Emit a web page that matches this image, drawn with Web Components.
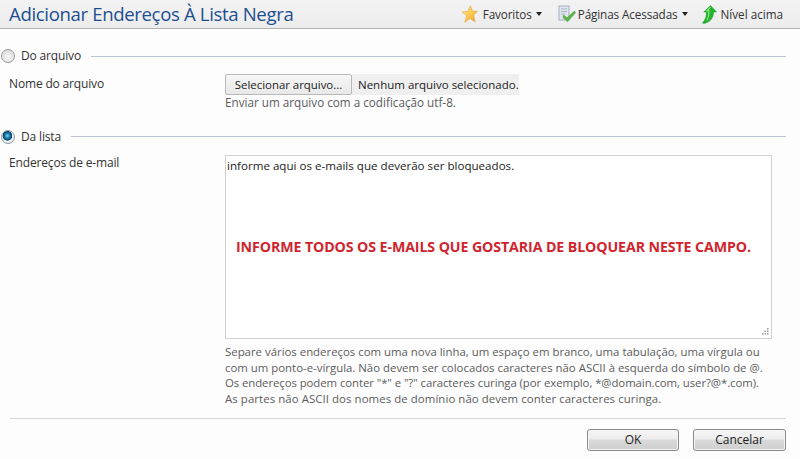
<!DOCTYPE html>
<html lang="pt"><head><meta charset="utf-8"><title>Adicionar Endereços</title>
<style>
html,body{margin:0;padding:0;background:#fdfdfd;height:459px;overflow:hidden}
body{font:12px/16px "Open Sans","Noto Sans",sans-serif;color:#333}
</style></head><body>
<dlg-header>
  <span slot="title">Adicionar Endereços À Lista Negra</span>
  <nav-item icon="star" menu style="letter-spacing:-.1px">Favoritos</nav-item>
  <nav-item icon="page" menu style="margin-left:5px;letter-spacing:-.1px">Páginas Acessadas</nav-item>
  <nav-item icon="up" style="margin-left:2px">Nível acima</nav-item>
</dlg-header>
<dlg-body>
  <section-head style="margin-top:19px">Do arquivo</section-head>
  <form-row label="Nome do arquivo" style="margin-top:10px;--label-top:2px">
    <file-pick></file-pick>
    <hint-text>Enviar um arquivo com a codificação utf-8.</hint-text>
  </form-row>
  <section-head checked style="margin-top:18px">Da lista</section-head>
  <form-row label="Endereços de e-mail" style="margin-top:10px">
    <text-box>informe aqui os e-mails que deverão ser bloqueados.</text-box>
    <hint-text style="margin-top:5px;font-size:11.4px"><span>Separe vários endereços com uma nova linha, um espaço em branco, uma tabulação, uma vírgula ou</span><br><span>com um ponto-e-vírgula. Não devem ser colocados caracteres não ASCII à esquerda do símbolo de @.</span><br><span style="letter-spacing:-.08px">Os endereços podem conter "*" e "?" caracteres curinga (por exemplo, *@domain.com, user?@*.com).</span><br><span style="letter-spacing:.08px">As partes não ASCII dos nomes de domínio não devem conter caracteres curinga.</span></hint-text>
  </form-row>
</dlg-body>
<dlg-footer>
  <act-button>OK</act-button>
  <act-button style="width:93px">Cancelar</act-button>
</dlg-footer>
<script>
function def(name, html, init){
  customElements.define(name, class extends HTMLElement{
    constructor(){super();this.attachShadow({mode:'open'}).innerHTML=html;}
    connectedCallback(){ if(init) init(this); }
  });
}
const F='"Open Sans","Noto Sans",sans-serif';
def('dlg-header',`<style>
:host{display:flex;align-items:center;justify-content:space-between;box-sizing:border-box;height:29px;padding:0 17px 0 9px;
 background:linear-gradient(#f3f3f3,#ececec);border-bottom:1px solid #b4b4b4}
.t{font:18.6px/26px ${F};color:#1c4f91;letter-spacing:-.36px}
.n{display:flex;align-items:center;gap:11px}
</style><div class="t"><slot name="title"></slot></div><div class="n"><slot></slot></div>`);
const ICONS={
 star:`<svg style="margin-right:5px;flex:none" width="17" height="18" viewBox="0 0 17 18"><defs><linearGradient id="s" x1="0" y1="0" x2="1" y2="1"><stop offset="0" stop-color="#fff09a"/><stop offset=".55" stop-color="#fbc64a"/><stop offset="1" stop-color="#f0932a"/></linearGradient></defs><path d="M9.500 .8l1.900 5.300 5.200.3-4 3.600 1.500 7-5-3.600-5.300 4 1.900-6.800L1 6.900l5.800-.4z" fill="url(#s)" stroke="#e2a94f" stroke-width=".7"/></svg>`,
 page:`<svg width="18" height="18" viewBox="0 0 18 18"><rect x="1" y="1" width="10" height="14" fill="#dfe6ee" stroke="#9fb0c2"/><path d="M3 4h6M3 6.500h6M3 9h4" stroke="#a7b5c4"/><path d="M5.500 10l3.500 2.800L16.500 6l1 1.800-8 9L5 12.500z" fill="#5cb548" stroke="#4a9a3a" stroke-width=".5"/></svg>`,
 up:`<svg style="margin-right:2px" width="16" height="19" viewBox="0 0 16 19"><path d="M9.500 .5l6 6.500H12.500c0 5-2.500 10-9.500 11.500l-1.500-.6C4.500 15 5.500 11 5.500 7H2.800z" fill="#1fb52c" stroke="#14922a" stroke-width=".5"/><path d="M9.500 2L6 5.800h2c.2 3-.4 6.500-2.200 9.500" fill="none" stroke="#9bea85" stroke-width="1.100"/></svg>`
};
def('nav-item',`<style>
:host{display:flex;align-items:center;gap:2px;font:11.7px/16px ${F};color:#333;white-space:nowrap;height:22px}
#i{display:flex;width:18px;justify-content:center}
#c{width:0;height:0;border:3.500px solid transparent;border-top:4px solid #222;border-bottom:0;display:none;margin-left:2px}
</style><span id="i"></span><slot></slot><span id="c"></span>`,el=>{
 el.shadowRoot.getElementById('i').innerHTML=ICONS[el.getAttribute('icon')]||'';
 if(el.hasAttribute('menu'))el.shadowRoot.getElementById('c').style.display='block';
});
def('dlg-body',`<style>:host{display:block}</style><slot></slot>`);
def('section-head',`<style>
:host{display:flex;align-items:center;height:16px;padding-right:14px;font:12px/16px ${F};letter-spacing:-.16px;color:#333}
.r{box-sizing:border-box;width:14px;height:14px;border-radius:50%;margin:0 6px 0 1px;flex:none;border:1px solid #9b9b9b;
 background:radial-gradient(circle at 50% 60%,#f6f6f6,#d4d4d4)}
:host([checked]) .r{background:radial-gradient(circle at 45% 40%,#7fd0ee 0,#0e6f9e 30%,#0b3f63 46%,#eef2f5 52%,#dfe3e6 100%);border-color:#8c99a4}
.l{flex:1;height:1px;background:#bcc3d2;margin-left:10px}
</style><span class="r"></span><slot></slot><span class="l"></span>`);
def('form-row',`<style>
:host{display:grid;grid-template-columns:216px 546px;padding-left:9px;font:12px/16px ${F};letter-spacing:-.16px;color:#333}
.a{padding-top:var(--label-top,0)}
.c{letter-spacing:0}
</style><div class="a" id="a"></div><div class="c"><slot></slot></div>`,el=>{el.shadowRoot.getElementById('a').textContent=el.getAttribute('label');});
def('file-pick',`<style>
:host{display:flex;align-items:center;height:21px;font:11.4px/16px ${F};color:#222}
.b{box-sizing:border-box;width:127px;height:21px;display:flex;align-items:center;justify-content:center;background:linear-gradient(#f7f7f7,#e8e8e8);border:1px solid #b9b9b9;border-radius:2px}
.n{background:#efefef;padding-left:6px;height:21px;line-height:21px;font-size:11.500px}
</style><span class="b">Selecionar arquivo...</span><span class="n">Nenhum arquivo selecionado.</span>`);
def('hint-text',`<style>:host{display:block;font:11.7px/15.75px ${F};color:#5c5c5c;white-space:nowrap}</style><slot></slot>`);
def('text-box',`<style>
:host{display:block;position:relative;box-sizing:border-box;height:184px;width:547px;background:#fff;border:1px solid #d0d0d0;padding:2px 1px;font:11.6px/16px ${F};color:#222}
.o{position:absolute;left:10px;top:82px;font:bold 14.200px/18px ${F};color:#d0252e;white-space:nowrap;letter-spacing:-.1px}
svg{position:absolute;right:1px;bottom:1px}
</style><slot></slot><div class="o">INFORME TODOS OS E-MAILS QUE GOSTARIA DE BLOQUEAR NESTE CAMPO.</div>
<svg width="10" height="10" viewBox="0 0 10 10" fill="#9a9a9a"><rect x="7" y="1" width="1.500" height="1.500"/><rect x="4.500" y="3.500" width="1.500" height="1.500"/><rect x="7" y="3.500" width="1.500" height="1.500"/><rect x="2" y="6" width="1.500" height="1.500"/><rect x="4.500" y="6" width="1.500" height="1.500"/><rect x="7" y="6" width="1.500" height="1.500"/></svg>`);
def('dlg-footer',`<style>
:host{display:flex;justify-content:flex-end;gap:14px;margin:11px 14px 0 10px;padding-top:10px;border-top:1px solid #d4d6da}
</style><slot></slot>`);
def('act-button',`<style>
:host{display:flex;align-items:center;justify-content:center;box-sizing:border-box;width:92px;height:22px;border:1px solid #8a8a8a;border-radius:3px;
 background:linear-gradient(#f6f6f6 0,#ededed 45%,#d9d9d9 50%,#cfcfcf 100%);font:12px/16px ${F};color:#222;box-shadow:inset 0 0 0 1px #f6f6f6}
</style><slot></slot>`);
</script>
</body></html>
